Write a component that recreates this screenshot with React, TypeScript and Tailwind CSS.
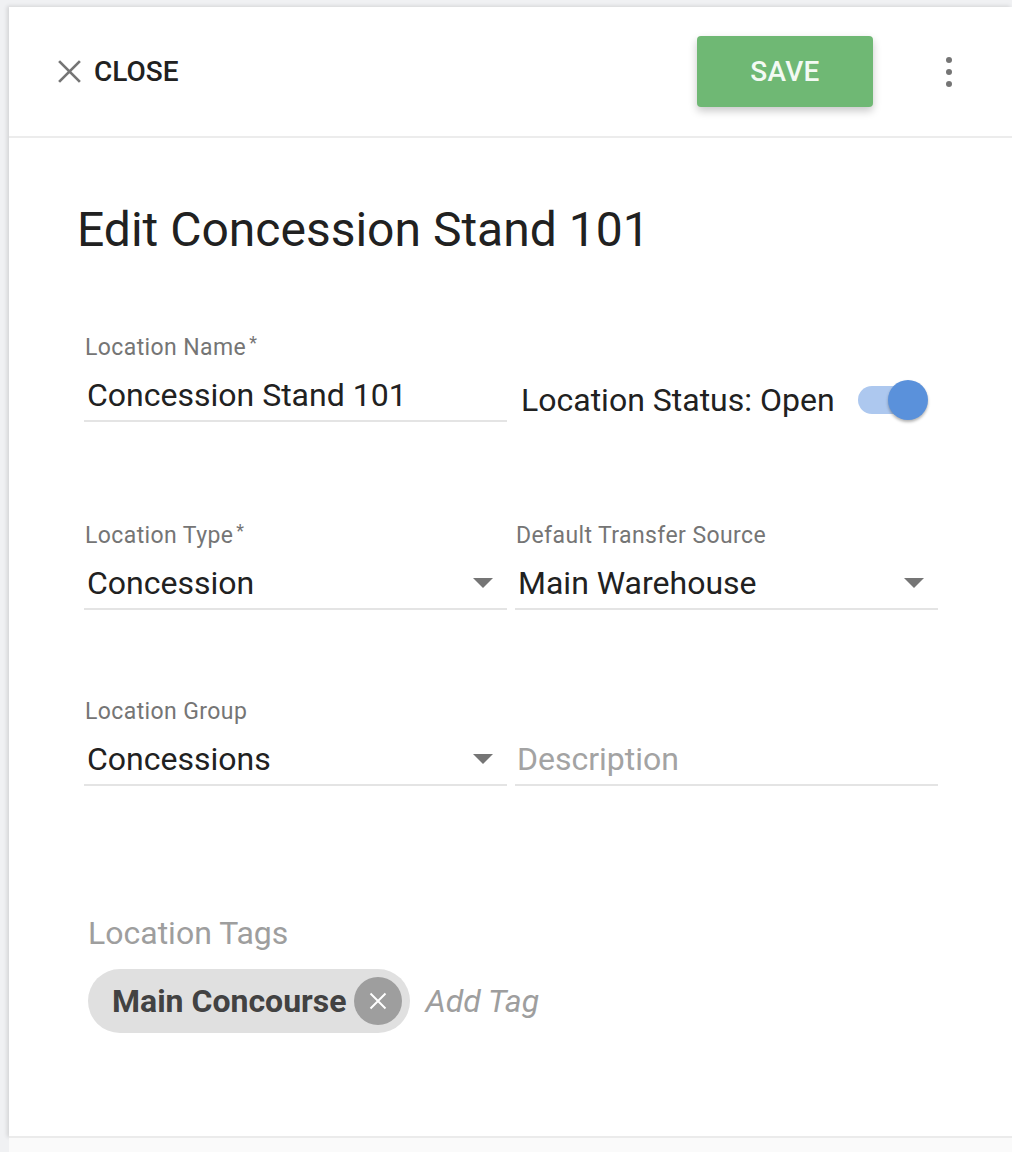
import { Switch } from "@radix-ui/react-switch";

const font = { fontFamily: "Roboto, 'Noto Sans', Arial, sans-serif" };

function CloseIcon({ className }: { className?: string }) {
  return (
    <svg viewBox="0 0 24 24" className={className} fill="none" stroke="currentColor" strokeWidth="2.6">
      <path d="M2 2 L22 22 M22 2 L2 22" />
    </svg>
  );
}

function Caret() {
  return (
    <svg viewBox="0 0 20 10" className="h-[10px] w-[20px] shrink-0 text-[#757575]" fill="currentColor">
      <path d="M0 0 H20 L10 10 Z" />
    </svg>
  );
}

interface FieldProps {
  label: string;
  required?: boolean;
  value?: string;
  placeholder?: string;
  select?: boolean;
}

function Field({ label, required, value, placeholder, select }: FieldProps) {
  return (
    <div className="flex flex-col">
      <div className="h-[24px] pl-[1px] text-[23px] leading-[24px] tracking-[0.4px] text-[#757575]">
        {label}
        {required && <span className="relative -top-[6px] ml-[3px] text-[18px]">*</span>}
      </div>
      <div className="mt-[16px] flex h-[46px] items-start justify-between border-b-2 border-[#e4e4e4] pl-[3px] pr-[14px]">
        {value ? (
          <span className="text-[32px] leading-[38px] text-[#212121]">{value}</span>
        ) : (
          <span className="text-[32px] leading-[38px] text-[#a3a3a3]">{placeholder}</span>
        )}
        {select && (
          <span className="mt-[14px]">
            <Caret />
          </span>
        )}
      </div>
    </div>
  );
}

export default function App() {
  return (
    <div style={font} className="flex h-[1152px] flex-col bg-[#f0f1f3] pl-[9px] pt-[7px]">
      <div className="flex h-[1131px] flex-col border-b-2 border-[#ebebeb] bg-white shadow-[-2px_-1px_4px_rgba(0,0,0,0.12)]">
        {/* header */}
        <div className="flex h-[131px] shrink-0 items-center border-b-2 border-[#ececec] pl-[48px] pr-[60px]">
          <button className="flex items-center gap-[12px] text-[#212121]">
            <CloseIcon className="h-[25px] w-[25px] text-[#757575]" />
            <span className="text-[28px] font-medium leading-[32px]">CLOSE</span>
          </button>
          <button className="ml-auto flex h-[71px] w-[176px] items-center justify-center rounded-[4px] bg-[#6fb874] text-[28px] font-medium tracking-[0.3px] text-[#f3faf3] shadow-[0_4px_8px_rgba(0,0,0,0.22)]">
            SAVE
          </button>
          <div className="ml-[73px] flex flex-col items-center gap-[6px]">
            <span className="h-[6px] w-[6px] rounded-full bg-[#757575]" />
            <span className="h-[6px] w-[6px] rounded-full bg-[#757575]" />
            <span className="h-[6px] w-[6px] rounded-full bg-[#757575]" />
          </div>
        </div>

        {/* body */}
        <div className="flex flex-col pl-[75px] pr-[74px] pt-[65px]">
          <h1 className="-ml-[7px] text-[48px] leading-[54px] text-[#212121]">Edit Concession Stand 101</h1>

          <div className="mt-[79px] grid grid-cols-2 gap-x-[8px]">
            <Field label="Location Name" required value="Concession Stand 101" />
            <div className="flex items-center pl-[6px] pt-[41px]">
              <span className="text-[32px] leading-[38px] text-[#212121]">Location Status: Open</span>
              <Switch checked className="relative ml-[23px] flex h-[40px] w-[70px] items-center">
                <span className="h-[28px] w-[68px] rounded-full bg-[#adc8ef]" />
                <span className="absolute right-0 top-0 h-[40px] w-[40px] rounded-full bg-[#5a91db] shadow-[0_2px_3px_rgba(0,0,0,0.3)]" />
              </Switch>
            </div>
          </div>

          <div className="mt-[102px] grid grid-cols-2 gap-x-[8px]">
            <Field label="Location Type" required value="Concession" select />
            <Field label="Default Transfer Source" value="Main Warehouse" select />
          </div>

          <div className="mt-[90px] grid grid-cols-2 gap-x-[8px]">
            <Field label="Location Group" value="Concessions" select />
            <div className="flex flex-col">
              <div className="h-[24px]" />
              <div className="mt-[16px] flex h-[46px] items-start border-b-2 border-[#e4e4e4] pl-[2px]">
                <span className="text-[32px] leading-[38px] text-[#a3a3a3]">Description</span>
              </div>
            </div>
          </div>

          <div className="mt-[128px] pl-[4px]">
            <div className="text-[32px] leading-[38px] text-[#9e9e9e]">Location Tags</div>
            <div className="mt-[17px] flex items-center">
              <div className="flex h-[64px] items-center rounded-full bg-[#e0e0e0] pl-[24px] pr-[8px]">
                <span className="text-[32px] font-bold leading-[38px] text-[#424242]">Main Concourse</span>
                <span className="ml-[7px] flex h-[48px] w-[48px] items-center justify-center rounded-full bg-[#9e9e9e]">
                  <CloseIcon className="h-[18px] w-[18px] text-white" />
                </span>
              </div>
              <span className="ml-[16px] text-[32px] italic leading-[38px] text-[#9e9e9e]">Add Tag</span>
            </div>
          </div>
        </div>
      </div>
      <div className="flex-1 bg-[#fafafa]" />
    </div>
  );
}
